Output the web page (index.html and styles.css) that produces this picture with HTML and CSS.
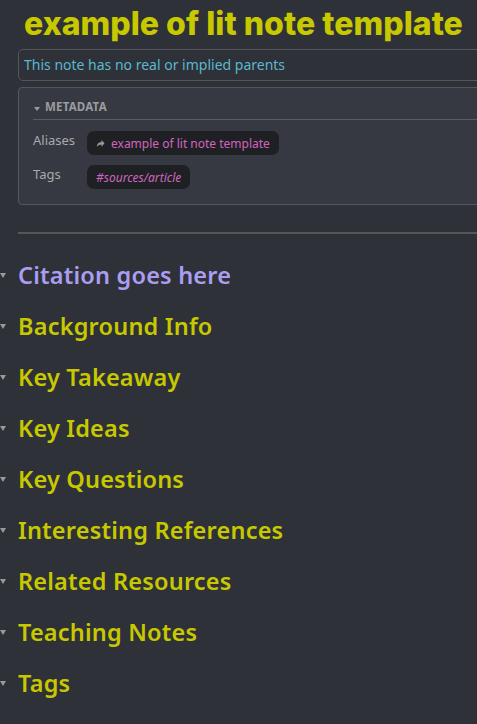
FILE: index.html
```html
<!DOCTYPE html>
<html>
<head>
<meta charset="utf-8">
<link rel="stylesheet" href="styles.css">
</head>
<body>
<main class="note">
  <h1 class="title">example of lit note template</h1>
  <div class="parents">This note has no real or implied parents</div>
  <section class="meta">
    <div class="meta-head"><span class="caret small"></span>METADATA</div>
    <div class="meta-row">
      <span class="meta-key">Aliases</span>
      <span class="pill"><svg class="alias-ico" viewBox="0 0 10 10" width="9" height="9"><path d="M1 9 C1 5 3 3.5 6 3.5 V1 L9.5 4.8 L6 8.5 V6 C3.5 6 2 7 1 9 Z" fill="#9a9a9a"/></svg>example of lit note template</span>
    </div>
    <div class="meta-row">
      <span class="meta-key">Tags</span>
      <span class="pill tag">#sources/article</span>
    </div>
  </section>
  <hr class="rule">
  <ul class="headings">
    <li class="h cite"><span class="caret"></span>Citation goes here</li>
    <li class="h"><span class="caret"></span>Background Info</li>
    <li class="h"><span class="caret"></span>Key Takeaway</li>
    <li class="h"><span class="caret"></span>Key Ideas</li>
    <li class="h"><span class="caret"></span>Key Questions</li>
    <li class="h"><span class="caret"></span>Interesting References</li>
    <li class="h"><span class="caret"></span>Related Resources</li>
    <li class="h"><span class="caret"></span>Teaching Notes</li>
    <li class="h"><span class="caret"></span>Tags</li>
  </ul>
</main>
</body>
</html>
```
FILE: styles.css
```css
html, body { margin: 0; padding: 0; overflow: hidden; }
body {
  background: #2e3137;
  font-family: "Noto Sans", "Lato", sans-serif;
  width: 477px;
  height: 724px;
}
.note { padding: 0 0 0 18px; width: 520px; }
.title {
  margin: 0;
  padding-top: 5px;
  height: 43px;
  box-sizing: border-box;
  font-family: "Inter", sans-serif;
  font-weight: 800;
  font-size: 32px;
  letter-spacing: 0.05px;
  color: #c8c800;
  line-height: 38px;
  padding-left: 6px;
  white-space: nowrap;
}
.parents {
  margin-top: 6px;
  height: 32px;
  box-sizing: border-box;
  border: 1px solid #54565b;
  border-radius: 5px;
  padding: 0 5px;
  line-height: 30px;
  font-size: 14px;
  color: #5ab8d0;
}
.meta {
  margin-top: 6px;
  background: #363941;
  border: 1px solid #55575c;
  border-radius: 4px;
  padding: 6px 14px 14px 14px;
  height: 118px;
  box-sizing: border-box;
}
.meta-head {
  display: flex;
  align-items: center;
  font-size: 11.5px;
  font-weight: 700;
  color: #9a9ca0;
  letter-spacing: 0.2px;
  height: 25px;
  border-bottom: 1px solid #5a5c61;
}
.caret {
  display: inline-block;
  width: 0; height: 0;
  border-left: 3.5px solid transparent;
  border-right: 3.5px solid transparent;
  border-top: 5px solid #9a9a9a;
}
.caret.small { margin: 4px 5px 0 1px; border-left-width: 3px; border-right-width: 3px; border-top-width: 4px; }
.meta-row {
  display: flex;
  align-items: flex-start;
  margin-top: 11px;
}
.meta-row + .meta-row { margin-top: 10px; }
.meta-key {
  width: 54px;
  font-size: 13px;
  color: #a8aaae;
  line-height: 18px;
}
.pill {
  display: inline-flex;
  align-items: center;
  height: 24px;
  padding: 0 9px;
  background: #1f2023;
  border-radius: 7px;
  font-size: 12px;
  color: #d065c0;
}
.alias-ico { margin-right: 6px; }
.tag { font-style: italic; }
.rule {
  margin: 27px 0 0 0;
  border: 0;
  border-top: 2px solid #55575a;
}
.headings { list-style: none; margin: 0; padding: 16px 0 0 0; }
.h {
  position: relative;
  height: 51px;
  line-height: 51px;
  font-size: 23.5px;
  font-weight: 600;
  letter-spacing: 0.2px;
  color: #c8c800;
}
.h .caret {
  position: absolute;
  left: -18px;
  top: 23px;
}
.cite { color: #ab9df2; }
```
